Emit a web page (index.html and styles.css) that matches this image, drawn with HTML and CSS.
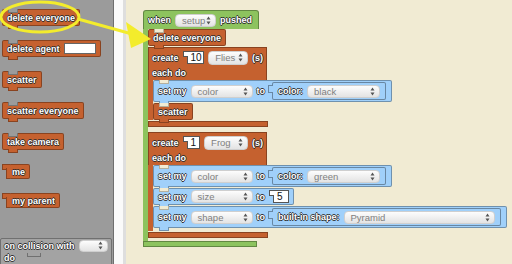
FILE: index.html
```html
<!DOCTYPE html>
<html lang="en">
<head>
  <meta charset="UTF-8">
  <title>Blocks Workspace</title>
  <link rel="stylesheet" href="styles.css">
</head>
<body>

  <div class="palette">
    <div class="blk stmt orange">delete everyone</div>
    <div class="blk stmt orange">delete agent <span class="slot"></span></div>
    <div class="blk stmt orange">scatter</div>
    <div class="blk stmt orange">scatter everyone</div>
    <div class="blk stmt orange">take camera</div>
    <div class="blk rep orange">me</div>
    <div class="blk rep orange">my parent</div>
    <div class="collide">
      <div class="collide-row">on collision with <span class="drop pick"><svg class="ud"><use href="#ud"/></svg></span></div>
      <div class="collide-row">do <span class="mouth"></span></div>
    </div>
  </div>

  <div class="scrollbar"></div>

  <div class="canvas">
    <div class="script">
      <div class="blk hat green">when <span class="drop event">setup<svg class="ud"><use href="#ud"/></svg></span> pushed</div>
      <div class="arm green-arm">
        <div class="blk stmt orange">delete everyone</div>

        <div class="cblock first">
          <div class="c-head orange">
            <div class="c-row">create <span class="num">10</span> <span class="drop breed">Flies<svg class="ud"><use href="#ud"/></svg></span> (s)</div>
            <div class="c-row">each do</div>
          </div>
          <div class="arm orange-arm">
            <div class="blk stmt blue tall">set my <span class="drop prop">color<svg class="ud"><use href="#ud"/></svg></span> to
              <span class="inrep blue">color: <span class="drop value">black<svg class="ud"><use href="#ud"/></svg></span></span>
            </div>
            <div class="blk stmt orange">scatter</div>
          </div>
          <div class="c-foot orange"></div>
        </div>

        <div class="cblock second">
          <div class="c-head orange">
            <div class="c-row">create <span class="num">1</span> <span class="drop breed">Frog<svg class="ud"><use href="#ud"/></svg></span> (s)</div>
            <div class="c-row">each do</div>
          </div>
          <div class="arm orange-arm">
            <div class="blk stmt blue tall">set my <span class="drop prop">color<svg class="ud"><use href="#ud"/></svg></span> to
              <span class="inrep blue">color: <span class="drop value">green<svg class="ud"><use href="#ud"/></svg></span></span>
            </div>
            <div class="blk stmt blue">set my <span class="drop prop">size<svg class="ud"><use href="#ud"/></svg></span> to <span class="num wide">5</span></div>
            <div class="blk stmt blue tall last">set my <span class="drop prop">shape<svg class="ud"><use href="#ud"/></svg></span> to
              <span class="inrep blue">built-in shape: <span class="drop shape-pick">Pyramid<svg class="ud"><use href="#ud"/></svg></span></span>
            </div>
          </div>
          <div class="c-foot orange"></div>
        </div>
      </div>
      <div class="c-foot green script-foot"></div>
    </div>
  </div>

  <!-- highlight drawn over the palette and canvas -->
  <svg class="annot" width="512" height="264" viewBox="0 0 512 264">
    <defs>
      <symbol id="ud" viewBox="0 0 5 9">
        <path d="M0.5 3.6 L2.5 0.6 L4.5 3.6Z M0.5 5.4 L2.5 8.4 L4.5 5.4Z" fill="#555"/>
      </symbol>
    </defs>
    <ellipse cx="40" cy="17" rx="39" ry="15" fill="none" stroke="#f3ec2c" stroke-width="3"/>
    <line x1="78" y1="19" x2="132" y2="34" stroke="#f3ec2c" stroke-width="3"/>
    <polygon points="126,22 131,48 151,39" fill="#f3ec2c"/>
  </svg>

</body>
</html>
```

FILE: styles.css
```css
body {
  margin: 0;
  height: 264px;
  overflow: hidden;
  display: flex;
  font-family: "Liberation Sans", Arial, sans-serif;
  font-size: 9px;
  font-weight: bold;
  color: #fff;
}

.palette {
  --under: #9b9b9b;
  width: 114px;
  flex-shrink: 0;
  box-sizing: border-box;
  overflow: hidden;
  background: #9b9b9b;
  border-right: 1px solid #6e6e6e;
  display: flex;
  flex-direction: column;
  align-items: flex-start;
  gap: 14px;
  padding: 9px 0 0 2px;
}

.palette > * {
  flex-shrink: 0;
}

.scrollbar {
  width: 9px;
  flex-shrink: 0;
  background: #fafafa;
  border-right: 3px solid #dedede;
}

.canvas {
  --under: #f1ebd3;
  flex: 1;
  background: #f1ebd3;
  padding: 10px 0 0 17px;
}

/* generic block */
.blk {
  position: relative;
  display: flex;
  align-items: center;
  gap: 4px;
  height: 17px;
  box-sizing: border-box;
  padding: 0 4px;
  border: 1px solid rgba(0, 0, 0, 0.3);
  border-radius: 2px;
  white-space: nowrap;
  text-shadow: 0.8px 0 #2e2e2e, -0.8px 0 #2e2e2e, 0 0.8px #2e2e2e, 0 -0.8px #2e2e2e;
}

.orange { background: #c5612f; }
.green  { background: #8dc35e; }
.blue   { background: #a0d0fa; }

/* top notch and bottom tab of statements */
.stmt::before {
  content: "";
  position: absolute;
  top: -1px;
  left: 5px;
  width: 8px;
  height: 3px;
  background: var(--under);
  border: 1px solid rgba(0, 0, 0, 0.25);
  border-top: none;
}

.stmt::after {
  content: "";
  position: absolute;
  bottom: -4px;
  left: 5px;
  width: 8px;
  height: 3px;
  background: inherit;
  border: 1px solid rgba(0, 0, 0, 0.3);
  border-top: none;
}

/* reporters get a tab on the left */
.rep {
  margin-left: 7px;
  height: 15px;
  border-left: none;
  padding-left: 3px;
}

.rep::before {
  content: "";
  position: absolute;
  top: -1px;
  left: -7px;
  width: 7px;
  height: 4px;
  background: inherit;
  border: 1px solid rgba(0, 0, 0, 0.3);
  border-right: none;
}

.rep::after {
  content: "";
  position: absolute;
  top: 3px;
  left: -3px;
  width: 3px;
  bottom: -1px;
  background: inherit;
  border-left: 1px solid rgba(0, 0, 0, 0.3);
  border-bottom: 1px solid rgba(0, 0, 0, 0.3);
}

.slot {
  width: 32px;
  height: 11px;
  background: #fff;
  border: 1px solid #666;
  box-sizing: border-box;
}

/* dropdowns */
.drop {
  display: inline-flex;
  align-items: center;
  justify-content: space-between;
  height: 13px;
  box-sizing: border-box;
  padding: 0 4px 0 6px;
  border: 1px solid #cfcfcf;
  border-radius: 4px;
  background: linear-gradient(#fdfdfd, #e3e3e3);
  color: #808080;
  font-weight: normal;
  font-size: 9.5px;
  text-shadow: none;
}

.ud {
  width: 5px;
  height: 9px;
}

.drop.event { width: 41px; }
.drop.breed { width: 44px; height: 14px; }
.drop.prop  { width: 62px; }
.drop.value { width: 73px; }
.drop.shape-pick { width: 151px; }
.drop.pick  { width: 29px; height: 12px; justify-content: flex-end; }

/* number inputs */
.num {
  position: relative;
  height: 13px;
  min-width: 13px;
  box-sizing: border-box;
  padding: 0 3px;
  margin-left: 4px;
  background: #fff;
  border: 1px solid #555;
  color: #111;
  font-weight: normal;
  font-size: 10px;
  line-height: 11px;
  text-shadow: none;
}

.num.wide { min-width: 16px; }

.num::before {
  content: "";
  position: absolute;
  left: -5px;
  top: -1px;
  width: 4px;
  height: 4px;
  background: #fff;
  border: 1px solid #555;
  border-right: none;
}

/* scripts on the canvas */
.script {
  display: inline-flex;
  flex-direction: column;
  align-items: flex-start;
}

.hat {
  width: 116px;
  height: 19px;
  border-radius: 3px 3px 0 0;
  border-bottom: none;
}

.arm {
  display: flex;
  flex-direction: column;
  align-items: flex-start;
}

.green-arm {
  border-left: 5px solid #8dc35e;
  padding-bottom: 3px;
}

.orange-arm {
  border-left: 5px solid #c5612f;
}

.green-arm > .blk { margin-bottom: 1px; }

.cblock {
  display: flex;
  flex-direction: column;
  align-items: flex-start;
}

.cblock.second { margin-top: 5px; }

.c-head {
  width: 119px;
  box-sizing: border-box;
  padding: 2px 3px 0;
  border: 1px solid rgba(0, 0, 0, 0.3);
  border-bottom: none;
  text-shadow: 0.8px 0 #2e2e2e, -0.8px 0 #2e2e2e, 0 0.8px #2e2e2e, 0 -0.8px #2e2e2e;
}

.c-row {
  display: flex;
  align-items: center;
  gap: 4px;
  height: 15px;
}

.tall {
  height: 22px;
  padding-right: 5px;
}

.arm .blk.stmt + .blk.stmt { margin-top: 1px; }
.arm .blk.last { margin-bottom: 3px; }

.inrep {
  position: relative;
  display: flex;
  align-items: center;
  gap: 4px;
  height: 18px;
  box-sizing: border-box;
  padding: 0 5px 0 5px;
  margin-left: 3px;
  border: 1px solid rgba(0, 0, 0, 0.35);
  border-radius: 2px;
}

.inrep::before {
  content: "";
  position: absolute;
  left: -5px;
  top: 2px;
  width: 4px;
  height: 6px;
  background: inherit;
  border: 1px solid rgba(0, 0, 0, 0.35);
  border-right: none;
}

.c-foot {
  height: 6px;
  box-sizing: border-box;
  border: 1px solid rgba(0, 0, 0, 0.3);
}

.cblock .c-foot {
  width: 120px;
  margin-top: 1px;
}

.script-foot {
  width: 114px;
}

/* event block in the palette */
.collide {
  margin: 16px 0 0 -2px;
  width: 112px;
  height: 40px;
  box-sizing: border-box;
  padding: 0 3px;
  background: #a3a3a3;
  border: 1px solid #707070;
  border-radius: 2px;
  text-shadow: 0.8px 0 #2e2e2e, -0.8px 0 #2e2e2e, 0 0.8px #2e2e2e, 0 -0.8px #2e2e2e;
}

.collide-row {
  display: flex;
  align-items: center;
  gap: 4px;
  height: 13px;
}

.collide-row + .collide-row {
  margin-top: 1px;
  align-items: flex-start;
}

.mouth {
  margin-left: 8px;
  width: 12px;
  height: 3px;
  border: 1px solid #707070;
  border-top: none;
}

.annot {
  position: absolute;
  top: 0;
  left: 0;
  pointer-events: none;
}
```
